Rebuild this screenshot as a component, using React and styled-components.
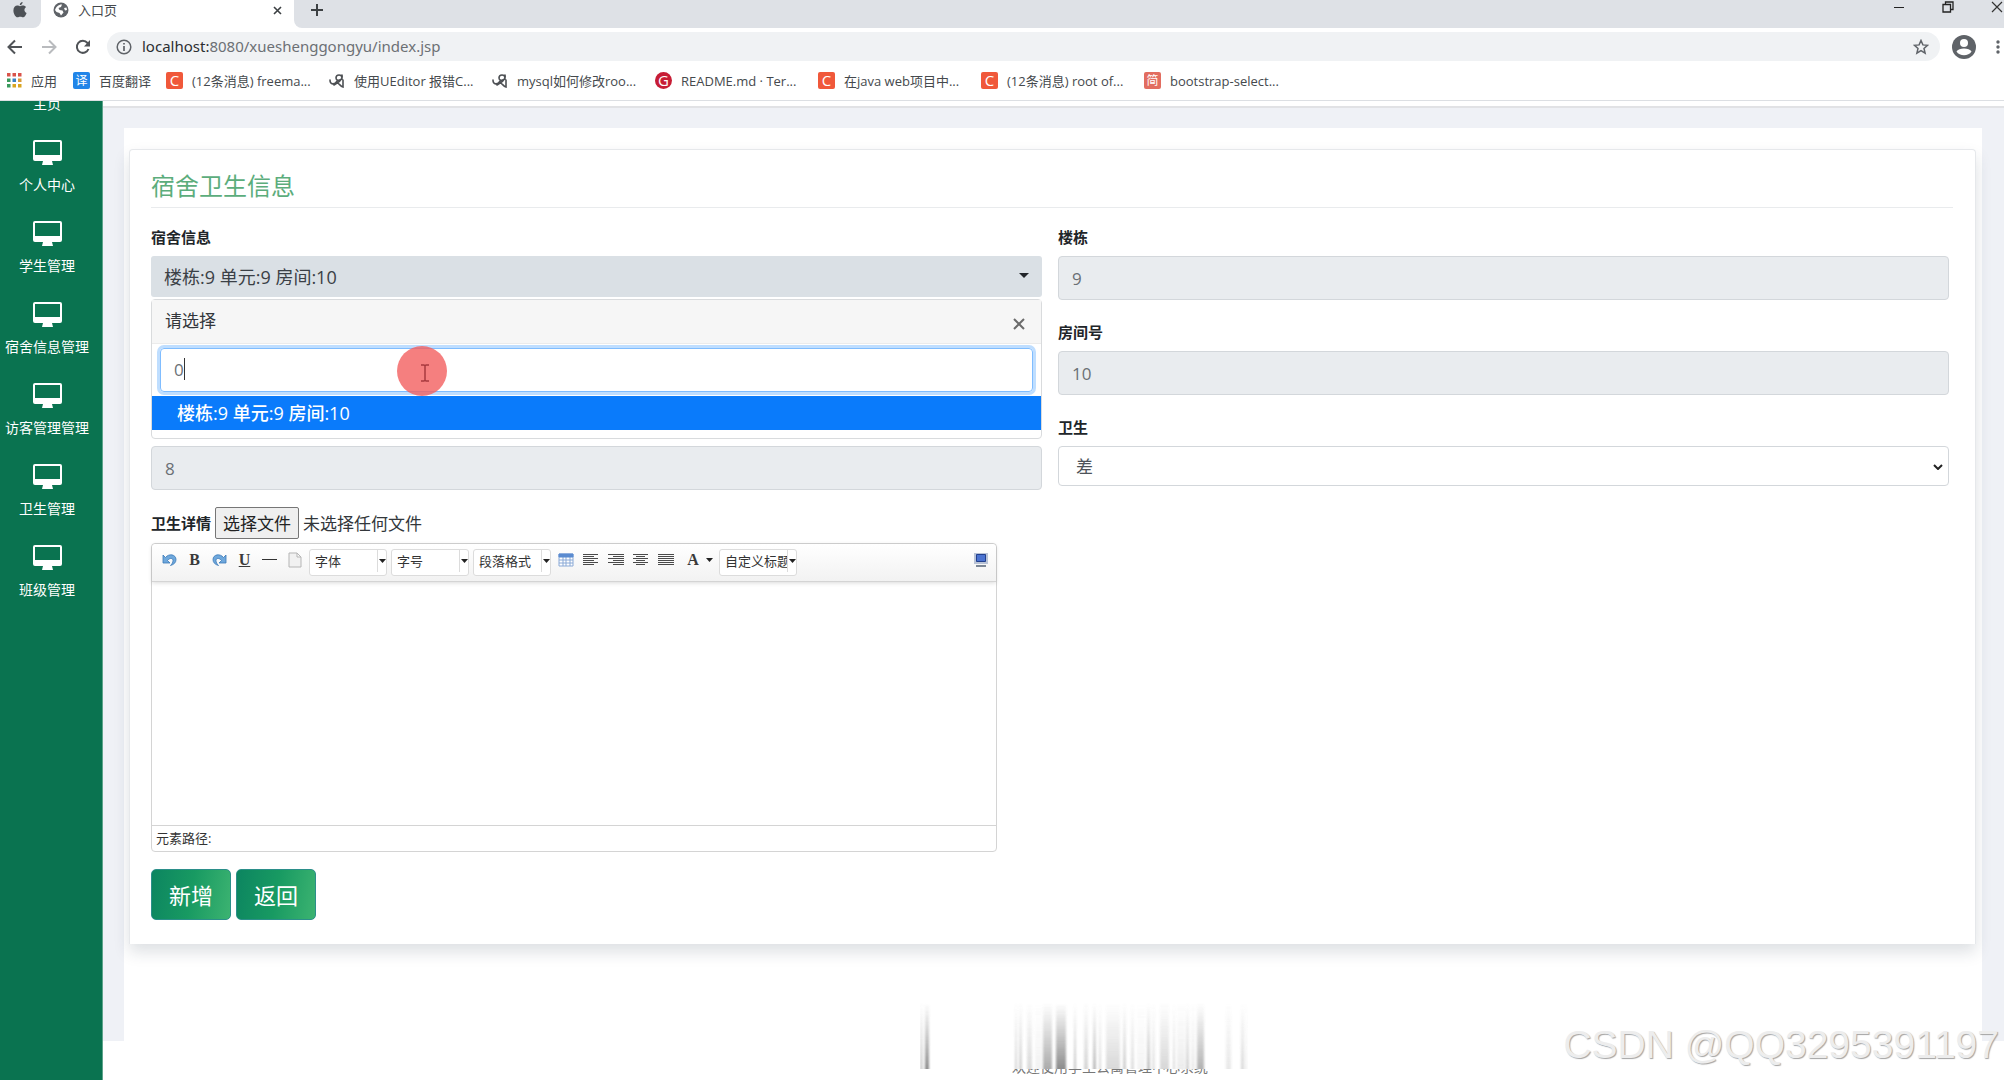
import React, { useRef, useState } from "react";
import styled, { createGlobalStyle, css } from "styled-components";

const menuItems = ["主页", "个人中心", "学生管理", "宿舍信息管理", "访客管理管理", "卫生管理", "班级管理"];

const bookmarks = [
  { icon: "c", text: "(12条消息) freema..." },
  { icon: "ue", text: "使用UEditor 报错C..." },
  { icon: "ue", text: "mysql如何修改roo..." },
  { icon: "g", text: "README.md · Ter..." },
  { icon: "c", text: "在java web项目中..." },
  { icon: "c", text: "(12条消息) root of..." },
  { icon: "jian", text: "bootstrap-select..." },
];

// x, width, opacity
const streaks = [
  [0, 3, 0.3], [5, 4, 0.75], [95, 2, 0.3], [99, 3, 0.3], [107, 5, 0.24],
  [115, 7, 0.08], [123, 9, 0.55], [136, 10, 0.75], [154, 2, 0.4], [164, 4, 0.28],
  [173, 3, 0.45], [179, 2, 0.25], [186, 14, 0.25], [203, 3, 0.32], [211, 3, 0.22],
  [217, 8, 0.07], [227, 3, 0.4], [232, 3, 0.18], [240, 9, 0.26], [253, 2, 0.24],
  [257, 8, 0.12], [266, 3, 0.3], [271, 4, 0.12], [277, 7, 0.5], [306, 5, 0.15],
  [321, 3, 0.25], [325, 2, 0.1],
];

function AppleIcon() {
  return (
    <svg width="14" height="16" viewBox="0 0 14 16" fill="#4d5156">
      <path d="M9.6 0c.1 1.7-1.300 3.100-2.800 3.200C6.600 1.600 8.100.1 9.600 0zM7 4.300c.8 0 1.600-.7 3-.7 1.300 0 2.400.6 3.100 1.500-2.400 1.500-2.100 4.900.5 5.900-.7 2-2.100 4.300-3.500 4.300-1.100 0-1.500-.6-2.800-.6-1.300 0-1.800.6-2.800.6C2.600 15.300.4 11.800.4 8.500c0-3.100 1.900-4.900 3.900-4.900 1.200 0 2 .7 2.700.7z" />
    </svg>
  );
}

function GlobeIcon() {
  return (
    <svg width="16" height="16" viewBox="0 0 16 16">
      <circle cx="8" cy="8" r="7.500" fill="#5f6368" />
      <path d="M2 8c1-3 3-5.500 7-5.500L8 5 5.500 6l1 2 3 .5 1 2L8 13.500 6.500 11 3.500 10zM11 6l2.500-.5L14 8l-2 .5z" fill="#fff" />
    </svg>
  );
}

function MonitorIcon() {
  return (
    <svg width="29" height="26" viewBox="0 0 29 26" fill="#fff">
      <path fillRule="evenodd" d="M2 0h25a2 2 0 0 1 2 2v17a2 2 0 0 1-2 2h-8l1 4H9l1-4H2a2 2 0 0 1-2-2V2a2 2 0 0 1 2-2zM2 2v13h25V2z" />
    </svg>
  );
}

function BookmarkIcon({ type }) {
  if (type === "ue") {
    return (
      <svg width="16" height="18" viewBox="0 0 16 18" fill="none" stroke="#4d5054" strokeWidth="1.600" strokeLinecap="round">
        <path d="M1 8c0 5 5 5 7 1M13 6a3 3 0 1 0-6 0c0 2.500 3 3 6 1M13 3c1 3 0 5-5 8M5 13l3-2c2 0 3 3 6 4V8" />
      </svg>
    );
  }
  if (type === "c") return <Badge $bg="#f0583a">C</Badge>;
  if (type === "g") return <Badge $bg="#c71d35" $round>G</Badge>;
  return <Badge $bg="#e26d60" $small>简</Badge>;
}

function AlignIcon({ rows }) {
  return (
    <svg width="16" height="14" viewBox="0 0 16 14" stroke="#4a4a4a" strokeWidth="1">
      {rows.map(([from, to], i) => (
        <path key={i} d={`M${from} ${i * 2 + 1.5}H${to}`} />
      ))}
    </svg>
  );
}

function Caret() {
  return (
    <svg width="7" height="4" viewBox="0 0 7 4">
      <path d="M0 0h7L3.500 4z" fill="#222" />
    </svg>
  );
}

function UndoIcon({ flip }) {
  return (
    <svg width="15" height="14" viewBox="0 0 15 14">
      <g transform={flip ? "translate(15 0) scale(-1 1)" : undefined}>
        <path d="M1 2v8h7L5.500 7.500C8 4.500 11 5 11 7.500c0 2-1 3.500-2.500 5C12 11.500 14 9.500 14 6.500c0-5-7-6.500-10.500-2z" fill="#6fa8dc" stroke="#3a78b8" strokeWidth="0.800" />
      </g>
    </svg>
  );
}

function EditorCombo({ label }) {
  return (
    <Combo>
      <select aria-label={label}>
        <option>{label}</option>
      </select>
      <span>
        <Caret />
      </span>
    </Combo>
  );
}

function Browser() {
  return (
    <header>
      <TabStrip>
        <PinnedTab>
          <AppleIcon />
        </PinnedTab>
        <ActiveTab>
          <GlobeIcon />
          <span>入口页</span>
          <IconButton aria-label="关闭标签页">
            <svg width="9" height="9" viewBox="0 0 9 9" stroke="#3c4043" strokeWidth="1.600">
              <path d="M1 1l7 7M8 1 1 8" />
            </svg>
          </IconButton>
        </ActiveTab>
        <StripRest>
          <IconButton aria-label="新标签页">
            <svg width="14" height="14" viewBox="0 0 14 14" stroke="#3c4043" strokeWidth="2">
              <path d="M7 1v12M1 7h12" />
            </svg>
          </IconButton>
          <WindowButtons>
            <IconButton aria-label="最小化">
              <svg width="12" height="12" viewBox="0 0 12 12" stroke="#222" strokeWidth="1">
                <path d="M1 6.500h10" />
              </svg>
            </IconButton>
            <IconButton aria-label="还原">
              <svg width="12" height="12" viewBox="0 0 12 12" fill="none" stroke="#222" strokeWidth="1.300">
                <path d="M1 3.500h7.500V11H1zM3.500 3.500V1H11v7.500H8.500" />
              </svg>
            </IconButton>
            <IconButton aria-label="关闭">
              <svg width="12" height="12" viewBox="0 0 12 12" stroke="#333" strokeWidth="1.200">
                <path d="M1 1l10 10M11 1 1 11" />
              </svg>
            </IconButton>
          </WindowButtons>
        </StripRest>
      </TabStrip>
      <Toolbar>
        <NavButtons>
          <IconButton aria-label="后退">
            <svg width="16" height="16" viewBox="0 0 16 16" fill="none" stroke="#505357" strokeWidth="2">
              <path d="M15 8H2M8 1.500 1.500 8 8 14.500" />
            </svg>
          </IconButton>
          <IconButton aria-label="前进">
            <svg width="16" height="16" viewBox="0 0 16 16" fill="none" stroke="#b9bbbe" strokeWidth="2">
              <path d="M1 8h13M8 1.500 14.500 8 8 14.500" />
            </svg>
          </IconButton>
          <IconButton aria-label="刷新">
            <svg width="16" height="16" viewBox="0 0 16 16" fill="none" stroke="#505357" strokeWidth="2">
              <path d="M13.500 10A6 6 0 1 1 12.500 4L14 6" />
              <path d="M15 1v6.500H9z" fill="#505357" stroke="none" />
            </svg>
          </IconButton>
        </NavButtons>
        <AddressBar>
          <svg width="16" height="16" viewBox="0 0 16 16" fill="none" stroke="#5f6368" strokeWidth="1.500">
            <circle cx="8" cy="8" r="6.800" />
            <path d="M8 7v5M8 4v1.600" strokeWidth="1.700" />
          </svg>
          <p>
            localhost:<span>8080/xueshenggongyu/index.jsp</span>
          </p>
          <IconButton aria-label="收藏">
            <svg width="16" height="16" viewBox="0 0 16 16" fill="none" stroke="#5f6368" strokeWidth="1.500">
              <path d="M8 1.500l1.900 4.400 4.600.4-3.500 3.100 1.100 4.700L8 11.600l-4.100 2.500L5 9.400 1.500 6.300l4.600-.4z" />
            </svg>
          </IconButton>
        </AddressBar>
        <IconButton aria-label="用户">
          <svg width="24" height="24" viewBox="0 0 24 24">
            <circle cx="12" cy="12" r="12" fill="#5f6368" />
            <circle cx="12" cy="8" r="4" fill="#fff" />
            <path d="M4.500 16.500c2-4 13-4 15 0-3 5-12 5-15 0z" fill="#fff" />
          </svg>
        </IconButton>
        <IconButton aria-label="菜单">
          <svg width="4" height="16" viewBox="0 0 4 16" fill="#5f6368">
            <circle cx="2" cy="3" r="1.700" />
            <circle cx="2" cy="8" r="1.700" />
            <circle cx="2" cy="13" r="1.700" />
          </svg>
        </IconButton>
      </Toolbar>
      <BookmarkBar>
        <Bookmark href="#" $width={66}>
          <svg width="15" height="15" viewBox="0 0 15 15">
            {["#d9534a", "#d9534a", "#d9534a", "#3a9a5c", "#3b82c4", "#d99a3a", "#3a9a5c", "#d9a520", "#d9a520"].map((fill, i) => (
              <rect key={i} x={(i % 3) * 5.5} y={Math.floor(i / 3) * 5.5} width="3.500" height="3.500" fill={fill} />
            ))}
          </svg>
          应用
        </Bookmark>
        <Bookmark href="#" $width={93}>
          <Badge $bg="#2185e8" $small>译</Badge>
          百度翻译
        </Bookmark>
        {bookmarks.map((item) => (
          <Bookmark href="#" key={item.text} $width={163}>
            <BookmarkIcon type={item.icon} />
            {item.text}
          </Bookmark>
        ))}
      </BookmarkBar>
    </header>
  );
}

function DormSelect() {
  const [keyword, setKeyword] = useState("0");
  return (
    <SelectWrapper>
      <SelectButton type="button" id="dorm" aria-expanded="true">
        楼栋:9 单元:9 房间:10
        <svg width="10" height="5" viewBox="0 0 10 5">
          <path d="M0 0h10L5 5z" fill="#212529" />
        </svg>
      </SelectButton>
      <Dropdown>
        <DropdownHeader>
          请选择
          <IconButton aria-label="关闭">
            <svg width="12" height="12" viewBox="0 0 12 12" stroke="#6b6b6b" strokeWidth="2">
              <path d="M1 1l10 10M11 1 1 11" />
            </svg>
          </IconButton>
        </DropdownHeader>
        <SearchRow>
          <SearchBox>
            <input
              aria-label="搜索"
              size="1"
              value={keyword}
              onChange={(e) => setKeyword(e.target.value)}
            />
            <TextCaret />
          </SearchBox>
          <ClickMark>
            <svg width="10" height="18" viewBox="0 0 10 18" fill="none" stroke="#a83a3f" strokeWidth="1.500">
              <path d="M1 1h3l1 1 1-1h3M5 2v14M1 17h3l1-1 1 1h3" />
            </svg>
          </ClickMark>
        </SearchRow>
        <Option type="button">楼栋:9 单元:9 房间:10</Option>
      </Dropdown>
    </SelectWrapper>
  );
}

function Editor() {
  return (
    <EditorBox>
      <EditorToolbar>
        <Tool aria-label="撤销"><UndoIcon /></Tool>
        <Tool aria-label="加粗">B</Tool>
        <Tool aria-label="重做"><UndoIcon flip /></Tool>
        <Tool aria-label="下划线" $underline>U</Tool>
        <Tool aria-label="分隔线">
          <svg width="15" height="14" viewBox="0 0 15 14" stroke="#333"><path d="M0 6.500h15" /></svg>
        </Tool>
        <Tool aria-label="新建">
          <svg width="14" height="16" viewBox="0 0 14 16" fill="#f1f1f1" stroke="#b5b5b5">
            <path d="M1 1h8l4 4v10H1zM9 1v4h4" />
          </svg>
        </Tool>
        <EditorCombo label="字体" />
        <EditorCombo label="字号" />
        <EditorCombo label="段落格式" />
        <Tool aria-label="表格">
          <svg width="16" height="14" viewBox="0 0 16 14" fill="#fff" stroke="#8aa9d6">
            <path d="M1 1h14v12H1zM1 7h14M1 10h14M5 4v9M8 4v9M12 4v9" />
            <path d="M1 1h14v3H1z" fill="#5b8bd0" stroke="#5b8bd0" />
          </svg>
        </Tool>
        <Tool aria-label="左对齐">
          <AlignIcon rows={[[0, 15], [0, 11], [0, 15], [0, 11], [0, 15], [0, 11]]} />
        </Tool>
        <Tool aria-label="右对齐">
          <AlignIcon rows={[[0, 16], [5, 16], [0, 16], [5, 16], [0, 16], [5, 16]]} />
        </Tool>
        <Tool aria-label="居中">
          <AlignIcon rows={[[0, 15], [3, 12], [0, 15], [3, 12], [0, 15], [3, 12]]} />
        </Tool>
        <Tool aria-label="两端对齐">
          <AlignIcon rows={[[0, 16], [0, 16], [0, 16], [0, 16], [0, 16], [0, 16]]} />
        </Tool>
        <Tool aria-label="字体颜色" $wide>
          A <Caret />
        </Tool>
        <EditorCombo label="自定义标题" />
        <LastTool aria-label="全屏">
          <svg width="16" height="14" viewBox="0 0 16 14">
            <path d="M1 0h14v11H1z" fill="#b9c3d6" />
            <path d="M3.500 1.500h9v7h-9z" fill="#4a72d0" stroke="#22408e" />
            <path d="M3 12h10v2H3z" fill="#7d8896" />
          </svg>
        </LastTool>
      </EditorToolbar>
      <EditorArea aria-label="卫生详情" />
      <EditorPath>元素路径:</EditorPath>
    </EditorBox>
  );
}

function App() {
  const fileInput = useRef(null);

  return (
    <Page>
      <GlobalStyle />
      <Browser />
      <Layout>
        <Sidebar>
          <ul>
            {menuItems.map((item) => (
              <li key={item}>
                <MenuLink href="#">
                  <MonitorIcon />
                  {item}
                </MenuLink>
              </li>
            ))}
          </ul>
        </Sidebar>
        <Main>
          <TopLine />
          <Backdrop>
            <Panel>
              <Card>
                <h4>宿舍卫生信息</h4>
                <FormGrid>
                  <Group>
                    <label htmlFor="dorm">宿舍信息</label>
                    <DormSelect />
                  </Group>
                  <Group>
                    <label htmlFor="building">楼栋</label>
                    <Field id="building" defaultValue="9" readOnly />
                  </Group>
                  <Group>
                    <Field aria-label="单元" readOnly />
                  </Group>
                  <Group>
                    <label htmlFor="room">房间号</label>
                    <Field id="room" defaultValue="10" readOnly />
                  </Group>
                  <Group>
                    <Field aria-label="人数" defaultValue="8" readOnly />
                  </Group>
                  <Group>
                    <label htmlFor="hygiene">卫生</label>
                    <HygieneWrapper>
                      <HygieneSelect id="hygiene">
                        <option>差</option>
                      </HygieneSelect>
                      <svg width="10" height="6" viewBox="0 0 10 6" fill="none" stroke="#222" strokeWidth="2">
                        <path d="M1 1l4 4 4-4" />
                      </svg>
                    </HygieneWrapper>
                  </Group>
                </FormGrid>
                <FileRow>
                  <label htmlFor="detail-file">卫生详情</label>
                  <input id="detail-file" type="file" ref={fileInput} hidden />
                  <FileButton type="button" onClick={() => fileInput.current.click()}>
                    选择文件
                  </FileButton>
                  <span>未选择任何文件</span>
                </FileRow>
                <Editor />
                <Actions>
                  <ActionButton type="button">新增</ActionButton>
                  <ActionButton type="button">返回</ActionButton>
                </Actions>
              </Card>
            </Panel>
          </Backdrop>
          <Footer>
            <p>欢迎使用学生公寓管理中心系统</p>
            <Smear width="328" height="66" viewBox="0 0 328 66">
              <defs>
                <linearGradient id="fade" x1="0" y1="0" x2="0" y2="1">
                  <stop offset="0" stopColor="#777" stopOpacity="0" />
                  <stop offset="1" stopColor="#666" />
                </linearGradient>
                <filter id="soft" x="-2%" width="104%" y="0" height="100%">
                  <feGaussianBlur stdDeviation="1 0" />
                </filter>
              </defs>
              <rect y="50" width="328" height="16" fill="#fff" />
              <g filter="url(#soft)">
                {streaks.map(([x, width, opacity]) => (
                  <rect key={x} x={x} width={width} height="66" fill="url(#fade)" opacity={opacity} />
                ))}
              </g>
            </Smear>
          </Footer>
        </Main>
      </Layout>
      <Watermark>CSDN @QQ3295391197</Watermark>
    </Page>
  );
}

const GlobalStyle = createGlobalStyle`
  * {
    box-sizing: border-box;
  }

  body {
    margin: 0;
    background: #fff;
    color: #212529;
    font-family: "Open Sans", "Noto Sans CJK SC", sans-serif;
    font-size: 17px;
  }

  button, input, select, textarea {
    font-family: inherit;
    color: inherit;
  }

  svg {
    display: block;
    flex-shrink: 0;
  }
`;

const Page = styled.div`
  display: flex;
  flex-direction: column;
  height: 100vh;
  overflow: hidden;
  position: relative;
`;

const IconButton = styled.button`
  display: flex;
  align-items: center;
  justify-content: center;
  padding: 0;
  border: none;
  background: transparent;
  cursor: pointer;
`;

const TabStrip = styled.div`
  display: flex;
  height: 28px;
  background: #fff;
`;

const PinnedTab = styled.div`
  width: 41px;
  padding: 2px 13px;
  background: #dee1e6;
  border-bottom-right-radius: 8px;
`;

const ActiveTab = styled.div`
  display: flex;
  align-items: center;
  gap: 9px;
  width: 253px;
  padding: 0 12px 8px;
  color: #45494d;
  font-size: 13px;
  line-height: 20px;

  button {
    margin-left: auto;
  }
`;

const StripRest = styled.div`
  flex: 1;
  display: flex;
  justify-content: space-between;
  padding: 0 1px 8px 16px;
  background: #dee1e6;
  border-bottom-left-radius: 8px;
`;

const WindowButtons = styled.div`
  display: flex;
  gap: 37px;
  padding-bottom: 6px;
`;

const Toolbar = styled.div`
  display: flex;
  align-items: center;
  height: 37px;
  gap: 12px;
  padding: 0 4px 0 7px;

  > button:last-child {
    margin-left: 8px;
  }
`;

const NavButtons = styled.div`
  display: flex;
  gap: 18px;
  margin-right: 4px;
`;

const AddressBar = styled.div`
  flex: 1;
  display: flex;
  align-items: center;
  gap: 10px;
  height: 29px;
  padding: 0 11px 0 9px;
  border-radius: 15px;
  background: #f0f2f4;

  p {
    flex: 1;
    margin: 0;
    padding-bottom: 1px;
    font-family: "Noto Sans", sans-serif;
    font-size: 15px;
    color: #2b2e31;
  }

  span {
    color: #6c7074;
  }
`;

const BookmarkBar = styled.nav`
  display: flex;
  align-items: center;
  height: 36px;
  padding: 0 0 4px 7px;
  border-bottom: 1px solid #dcdfe3;
`;

const Bookmark = styled.a`
  display: flex;
  align-items: center;
  gap: 9px;
  width: ${(props) => props.$width}px;
  color: #45494d;
  font-size: 13px;
  line-height: 20px;
  white-space: nowrap;
  text-decoration: none;
`;

const Badge = styled.span`
  display: flex;
  align-items: center;
  justify-content: center;
  width: 17px;
  height: 17px;
  border-radius: ${(props) => (props.$round ? "9px" : "2px")};
  background: ${(props) => props.$bg};
  color: #fff;
  font-size: ${(props) => (props.$small ? "12px" : "15px")};
  line-height: 17px;
`;

const Layout = styled.div`
  flex: 1;
  display: flex;
  min-height: 0;
`;

const Sidebar = styled.nav`
  width: 103px;
  flex-shrink: 0;
  overflow: hidden;
  background: #0a7350;
  border-right: 1px solid #5da48b;

  ul {
    margin: -42px 8px 0 0;
    padding: 0;
    list-style: none;
  }
`;

const MenuLink = styled.a`
  display: flex;
  flex-direction: column;
  align-items: center;
  gap: 9px;
  height: 81px;
  color: #fff;
  font-size: 14px;
  line-height: 20px;
  white-space: nowrap;
  text-decoration: none;
`;

const Main = styled.main`
  flex: 1;
  display: flex;
  flex-direction: column;
  min-width: 0;
`;

const TopLine = styled.div`
  height: 7px;
  border-bottom: 2px solid #e1e2e5;
`;

const Backdrop = styled.div`
  flex: 1;
  display: flex;
  padding: 20px 22px 0 21px;
  background: #eff1f6;
`;

const Panel = styled.div`
  flex: 1;
  min-width: 0;
  padding: 21px 6px 0 5px;
  background: #fff;
`;

const Card = styled.section`
  padding: 20px 22px 24px 21px;
  border: 1px solid #e6e8eb;
  border-bottom: none;
  border-radius: 4px 4px 0 0;
  background: #fff;
  box-shadow: 0 8px 16px rgba(30, 50, 70, 0.15);

  h4 {
    margin: 0 0 18px;
    padding-bottom: 5px;
    border-bottom: 1px solid #e9ebed;
    color: #5cad7c;
    font-size: 24px;
    font-weight: 400;
    line-height: 32px;
  }
`;

const FormGrid = styled.div`
  display: grid;
  grid-template-columns: 1fr 1fr;
  gap: 21px 16px;
  margin-right: 4px;
`;

const labelText = css`
  color: #212529;
  font-size: 15px;
  font-weight: 700;
  line-height: 22px;
`;

const Group = styled.div`
  display: flex;
  flex-direction: column;
  justify-content: flex-end;
  min-height: 74px;

  > label {
    ${labelText}
    margin-bottom: 8px;
  }
`;

const Field = styled.input`
  width: 100%;
  height: 44px;
  padding: 0 13px;
  border: 1px solid #d3d7db;
  border-radius: 4px;
  outline: none;
  background: #e9ecef;
  color: #6b7075;
  font-size: 17px;
`;

const SelectWrapper = styled.div`
  position: relative;
  height: 44px;
`;

const SelectButton = styled.button`
  display: flex;
  align-items: center;
  justify-content: space-between;
  width: 100%;
  height: 41px;
  padding: 0 13px 2px;
  border: none;
  border-radius: 3px;
  background: #dae0e5;
  color: #3b4046;
  font-size: 18px;
`;

const Dropdown = styled.div`
  position: absolute;
  z-index: 2;
  top: 43px;
  left: 0;
  right: 0;
  padding-bottom: 8px;
  border: 1px solid #d9dbdd;
  border-radius: 4px;
  background: #fff;
`;

const DropdownHeader = styled.div`
  display: flex;
  justify-content: space-between;
  height: 44px;
  padding: 0 16px 0 13px;
  border-bottom: 1px solid #ebebeb;
  background: #f6f6f6;
  color: #33373b;
  line-height: 41px;

  button {
    padding-top: 4px;
  }
`;

const SearchRow = styled.div`
  position: relative;
  padding: 4px 8px;
`;

const SearchBox = styled.div`
  display: flex;
  align-items: center;
  height: 44px;
  padding: 0 13px 2px;
  border: 1px solid #80bdff;
  border-radius: 4px;
  box-shadow: 0 0 0 3px #bfdeff;

  input {
    width: 10px;
    padding: 0;
    border: none;
    outline: none;
    background: transparent;
    color: #6b7075;
    font-size: 17px;
  }
`;

const TextCaret = styled.span`
  width: 1px;
  height: 22px;
  background: #333;
`;

const ClickMark = styled.div`
  position: absolute;
  top: 2px;
  left: 245px;
  display: flex;
  align-items: center;
  justify-content: center;
  width: 50px;
  height: 50px;
  padding: 4px 0 0 6px;
  border-radius: 50%;
  background: rgba(242, 95, 95, 0.8);
`;

const Option = styled.button`
  display: block;
  width: 100%;
  height: 34px;
  padding: 0 25px 2px;
  border: none;
  background: #0a7bfb;
  color: #fff;
  font-size: 18px;
  font-weight: 500;
  text-align: left;
`;

const HygieneWrapper = styled.div`
  position: relative;
  height: 44px;

  svg {
    position: absolute;
    top: 18px;
    right: 6px;
    pointer-events: none;
  }
`;

const HygieneSelect = styled.select`
  width: 100%;
  height: 40px;
  padding: 0 17px;
  border: 1px solid #d3d7db;
  border-radius: 4px;
  background: #fff;
  color: #4d5359;
  font-size: 17px;
  appearance: none;
`;

const FileRow = styled.div`
  display: flex;
  align-items: center;
  gap: 4px;
  margin: 17px 0 4px;
  color: #33373b;

  label {
    ${labelText}
  }

  span {
    padding-bottom: 2px;
  }
`;

const FileButton = styled.button`
  height: 32px;
  padding: 0 7px 2px;
  border: 1px solid #767676;
  border-radius: 2px;
  background: #efefef;
  color: #222;
  font-size: 17px;
`;

const EditorBox = styled.div`
  max-width: 846px;
  border: 1px solid #d4d4d4;
  border-radius: 4px;
`;

const EditorToolbar = styled.div`
  display: flex;
  align-items: flex-start;
  height: 38px;
  padding: 5px 3px 5px 5px;
  border-bottom: 1px solid #d4d4d4;
  border-radius: 4px 4px 0 0;
  background: linear-gradient(#fff, #f2f2f2);
  box-shadow: 0 1px 4px rgba(0, 0, 0, 0.15);
`;

const Tool = styled.button`
  display: flex;
  align-items: center;
  justify-content: center;
  gap: 7px;
  width: ${(props) => (props.$wide ? "34px" : "25px")};
  height: 22px;
  margin-left: ${(props) => (props.$wide ? "5px" : "0")};
  padding: 0;
  border: none;
  background: transparent;
  color: #3a3a3a;
  font-family: "Liberation Serif", serif;
  font-size: 16px;
  font-weight: 700;
  text-decoration: ${(props) => (props.$underline ? "underline" : "none")};
`;

const LastTool = styled(Tool)`
  margin-left: auto;
`;

const Combo = styled.div`
  display: flex;
  width: 78px;
  height: 27px;
  margin: 0 2px;
  border: 1px solid #dcdcdc;
  border-radius: 3px;
  background: #fff;

  select {
    width: 68px;
    height: 22px;
    padding: 0 0 0 5px;
    border: none;
    border-right: 1px solid #dcdcdc;
    background: transparent;
    color: #333;
    font-size: 13px;
    appearance: none;
  }

  span {
    padding: 9px 0 0 1px;
  }
`;

const EditorArea = styled.textarea`
  display: block;
  width: 100%;
  height: 243px;
  border: none;
  outline: none;
  background: transparent;
  resize: none;
`;

const EditorPath = styled.div`
  height: 26px;
  padding: 0 4px;
  border-top: 1px solid #d4d4d4;
  color: #333;
  font-size: 13px;
  line-height: 25px;
`;

const Actions = styled.div`
  display: flex;
  gap: 5px;
  margin-top: 17px;
`;

const ActionButton = styled.button`
  height: 51px;
  padding: 0 17px 2px;
  border: 1px solid #2b8f8a;
  border-radius: 5px;
  background: linear-gradient(100deg, #0c8560, #189a62 50%, #3cb371);
  color: #fff;
  font-size: 22px;
`;

const Footer = styled.footer`
  position: relative;
  height: 39px;
  padding-top: 16px;

  p {
    margin: 0 0 0 909px;
    color: #777;
    font-size: 14px;
    line-height: 20px;
  }
`;

const Smear = styled.svg`
  position: absolute;
  left: 817px;
  bottom: 11px;
`;

const Watermark = styled.div`
  position: absolute;
  right: 5px;
  bottom: 13px;
  color: #ededed;
  font-family: "Liberation Sans", Arial, sans-serif;
  font-size: 39px;
  line-height: 44px;
  text-shadow: 1px 1px 1px #a4a4a4;
`;

export default App;
